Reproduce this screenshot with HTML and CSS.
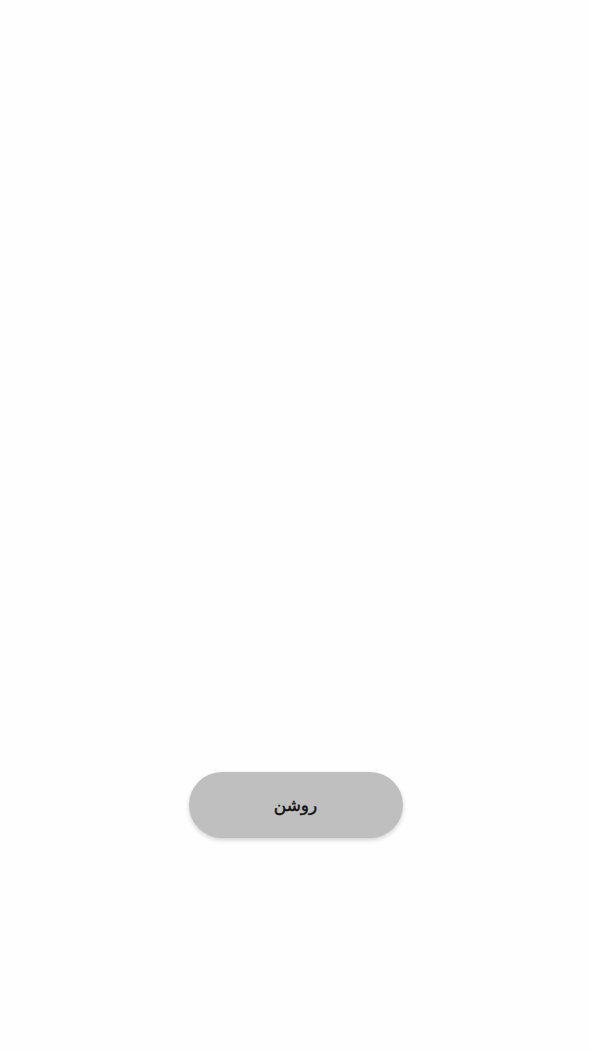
FILE: index.html
```html
<!DOCTYPE html>
<html lang="fa" dir="rtl">
    <head>
        <title>Light</title>
        <meta charset="UTF-8">
        <link rel="stylesheet" href="styles.css">
    </head>
    <body>
        <div class="screen">
            <button class="lightBtn" type="button">روشن</button>
        </div>
    </body>
</html>
```
FILE: styles.css
```css
html, body {
    margin: 0;
    padding: 0;
    background: #fefefe;
}
.screen {
    width: 591px;
    height: 1051px;
    display: flex;
    justify-content: center;
    align-items: flex-start;
    padding-top: 772px;
    box-sizing: border-box;
}
.lightBtn {
    width: 214px;
    height: 66px;
    border: none;
    border-radius: 33px;
    background: #bfbfbf;
    color: #111;
    font-family: "DejaVu Sans", "Noto Sans", sans-serif;
    font-size: 17px;
    -webkit-text-stroke: 0.4px #111;
    padding: 0;
    box-shadow: 0 2px 4px rgba(0, 0, 0, 0.18);
}
```
